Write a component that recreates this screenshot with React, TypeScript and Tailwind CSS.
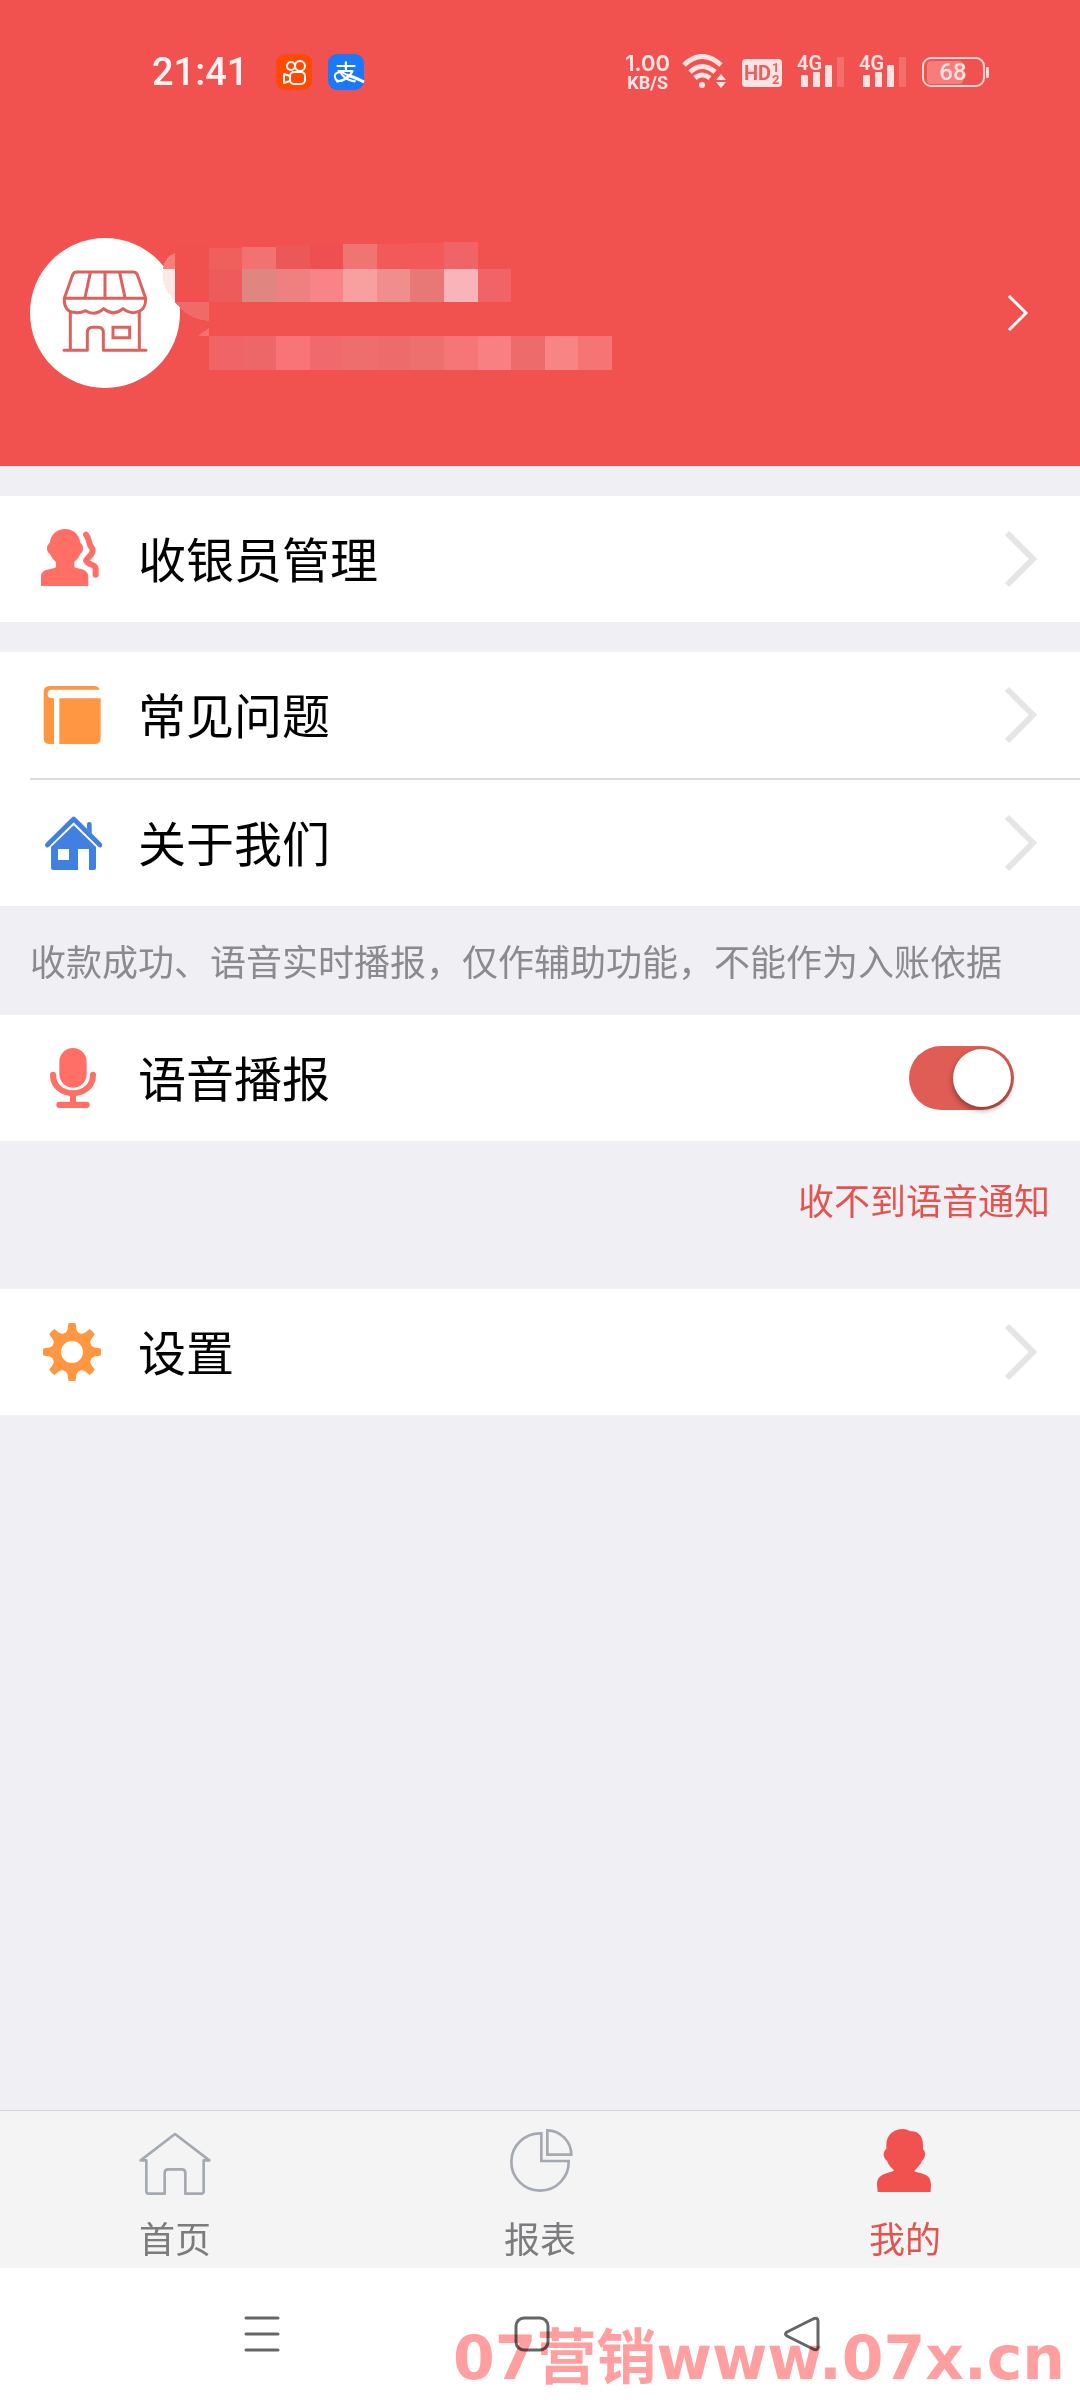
import React, { useState } from 'react';

interface IconProps {
  className?: string;
}

const mosaicCells: [number, number, number, number, string][] = [
  [209, 248, 33, 21, '#ef5f5c'], [242, 247, 34, 22, '#f17270'], [276, 245, 34, 24, '#ea5858'], [310, 245, 33, 24, '#ee5051'],
  [343, 244, 34, 25, '#f07472'], [377, 244, 33, 25, '#f25a59'], [410, 243, 34, 26, '#f25958'], [444, 242, 34, 27, '#f06468'],
  [175, 246, 34, 56, '#f0514f'], [209, 269, 33, 33, '#ed5c5b'], [242, 269, 34, 33, '#e08680'], [276, 269, 34, 33, '#ef8080'],
  [310, 269, 33, 33, '#f88487'], [343, 269, 34, 33, '#f89f9f'], [377, 269, 33, 33, '#f08e8e'], [410, 269, 34, 33, '#e87876'],
  [444, 269, 34, 33, '#f8b4b8'], [478, 269, 33, 33, '#f06468'],
  [209, 336, 33, 34, '#f06468'], [242, 336, 34, 34, '#ed6668'], [276, 336, 34, 34, '#f87476'], [310, 336, 33, 34, '#f0696d'],
  [343, 336, 34, 34, '#ee6e6e'], [377, 336, 33, 34, '#ee6b6b'], [410, 336, 34, 34, '#ed706e'], [444, 336, 34, 34, '#f67678'],
  [478, 336, 33, 34, '#f88082'], [511, 336, 34, 34, '#ee6b6c'], [545, 336, 33, 34, '#f88484'], [578, 336, 34, 34, '#f67474'],
];

const NameMosaic: React.FC<IconProps> = ({ className }) => (
  <svg className={className} viewBox="160 238 480 150" shapeRendering="crispEdges" aria-hidden="true">
    <path d="M163 269C164 262 168 255 175 253V269Z" fill="#f4807c" />
    <path d="M163 269H175V300C168 294 163 286 163 278Z" fill="#fde8e6" />
    <path d="M175 302H209V321C196 320 184 315 175 302Z" fill="#f06a69" />
    <path d="M198 336L209 328V336Z" fill="#f17271" />
    {mosaicCells.map(([x, y, w, h, fill]) => (
      <rect key={`${x}-${y}`} x={x} y={y} width={w} height={h} fill={fill} />
    ))}
  </svg>
);

const StoreIcon: React.FC<IconProps> = ({ className }) => (
  <svg className={className} viewBox="90 54 450 450" fill="none" stroke="#dc625d" strokeWidth="9" strokeLinecap="round" strokeLinejoin="round">
    <path d="M193 235L218 164Q222 156 231 156H399Q408 156 412 164L437 235Z" />
    <path d="M271 158L255 233M315 158V233M359 158L375 233" />
    <path d="M193 235C191 258 202 275 219 277Q240 281 257 272Q285 290 311 266Q340 291 369 266Q392 284 414 275C430 270 438 254 437 235" />
    <path d="M211 277V391M418 275V391M192 391H262V338Q262 322 278 322H294Q310 322 310 338V391H438" />
    <path d="M339 322H389V353H339Z" strokeLinejoin="miter" />
  </svg>
);

const CashierIcon: React.FC<IconProps> = ({ className }) => (
  <svg className={className} viewBox="90 111 252 252">
    <path d="M195 147C220 147 238 163 241 188C252 196 252 214 241 221C237 232 230 239 223 246V260C228 268 265 262 265 290V318H123V290C123 262 163 270 168 260V246C160 239 154 232 150 222C138 214 138 198 149 189C153 163 170 147 195 147Z" fill="#ff6f65" />
    <path d="M258 164C270 178 263 190 277 206C283 222 264 230 258 242C264 256 286 252 287 266V284" fill="none" stroke="#ff6f65" strokeWidth="18" strokeLinecap="round" strokeLinejoin="round" />
  </svg>
);

const BookIcon: React.FC<IconProps> = ({ className }) => (
  <svg className={className} viewBox="90 579 252 252">
    <path d="M149 618H282Q296 618 299 629H157Q143 629 143 642Q143 655 157 655H162V792H149Q131 792 131 774V636Q131 618 149 618Z" fill="#ff9742" />
    <path d="M178 655H302V774Q302 792 284 792H178Z" fill="#ff9742" />
  </svg>
);

const HouseIcon: React.FC<IconProps> = ({ className }) => (
  <svg className={className} viewBox="90 963 252 252">
    <path d="M142 1095L221 1017L300 1095" fill="none" stroke="#4080e0" strokeWidth="14" strokeLinecap="round" strokeLinejoin="round" />
    <path d="M261 1046V1032Q261 1026 268 1026Q275 1026 275 1032V1062Z" fill="#4080e0" />
    <path fillRule="evenodd" d="M221 1036L288 1101V1164Q288 1170 282 1170H267V1107H234V1170H160Q153 1170 153 1164V1101ZM174 1107V1140H207V1107Z" fill="#4080e0" />
  </svg>
);

const MicIcon: React.FC<IconProps> = ({ className }) => (
  <svg className={className} viewBox="90 408 252 252">
    <rect x="178" y="444" width="82" height="119" rx="41" fill="#ff6f65" />
    <path d="M159 524C159 598 279 598 279 524" fill="none" stroke="#ff6f65" strokeWidth="18" strokeLinecap="round" />
    <path d="M210 580H228V606H210Z" fill="#ff6f65" />
    <rect x="169" y="605" width="100" height="19" rx="9" fill="#ff6f65" />
  </svg>
);

const GearIcon: React.FC<IconProps> = ({ className }) => (
  <svg className={className} viewBox="90 1230 252 252">
    {[0, 45, 90, 135, 180, 225, 270, 315].map((angle) => (
      <path
        key={angle}
        transform={`rotate(${angle} 216 1356)`}
        d="M192 1302Q204 1296 204 1275Q204 1269 210 1269H222Q228 1269 228 1275Q228 1296 240 1302Z"
        fill="#ff9742"
      />
    ))}
    <circle cx="216" cy="1356" r="47" fill="none" stroke="#ff9742" strokeWidth="28" />
  </svg>
);

const HomeTabIcon: React.FC<IconProps> = ({ className }) => (
  <svg className={className} viewBox="99 90 252 252" fill="none" stroke="#a5a9b1" strokeWidth="8" strokeLinejoin="round">
    <path d="M139 211H122L225 132L328 211H311V304Q311 311 304 311H256V249Q256 238 245 238H205Q194 238 194 249V311H146Q139 311 139 304Z" />
  </svg>
);

const PieTabIcon: React.FC<IconProps> = ({ className }) => (
  <svg className={className} viewBox="1194 90 252 252" fill="none" stroke="#a5a9b1" strokeWidth="8">
    <path d="M1324 130A86 86 0 1 0 1406 213H1324Z" />
    <path d="M1342 121A74 74 0 0 1 1414 194H1342Z" />
  </svg>
);

const MineTabIcon: React.FC<IconProps> = ({ className }) => (
  <svg className={className} viewBox="129 90 252 252">
    <path d="M249 117C258 117 266 120 271 124C290 121 309 134 309 165V178C318 184 318 204 306 212C301 226 291 232 283 244C299 252 333 248 333 284L332 306H173L171 284C171 248 208 252 222 241C213 232 206 226 201 212C188 204 188 184 199 177V162C200 134 222 117 249 117Z" fill="#f2524f" />
  </svg>
);

const Chevron: React.FC<IconProps> = ({ className }) => (
  <svg className={className} viewBox="0 0 36 60" fill="none" stroke="#e5e5e5" strokeWidth="6">
    <path d="M5 4L31 30L5 56" />
  </svg>
);

const Signal = () => (
  <svg className="w-[46px] h-9 overflow-visible" viewBox="0 0 46 36" fill="#ffe3e2">
    <text x="-1" y="16" fontSize="20" fontWeight="600" fontFamily="Roboto, sans-serif">4G</text>
    <rect x="3" y="21" width="7" height="12" rx="1" />
    <rect x="15" y="18" width="7" height="15" rx="1" />
    <rect x="27" y="11" width="7" height="22" rx="1" />
    <rect x="39" y="3" width="7" height="30" rx="1" opacity="0.2" />
  </svg>
);

const StatusBar = () => (
  <div className="flex items-center justify-between h-36 pl-[152px] pr-[90px]">
    <div className="flex items-center">
      <time className="font-[Roboto] text-[38px] font-medium leading-[48px] text-[#fff4f3]">21:41</time>
      <div className="flex gap-4 ml-7">
        <svg className="w-9 h-9" viewBox="0 0 36 36" fill="none" stroke="#fff" strokeWidth="2">
          <rect width="36" height="36" rx="9" fill="#ff4a06" stroke="none" />
          <circle cx="15" cy="12" r="4" />
          <circle cx="24" cy="12" r="5" />
          <rect x="14" y="18" width="15" height="12" rx="4" />
          <path d="M14 22L8 20V29L14 27" strokeLinejoin="round" />
        </svg>
        <svg className="w-9 h-9 overflow-visible" viewBox="0 0 36 36">
          <rect width="36" height="36" rx="9" fill="#1b78fb" />
          <text x="18" y="26" textAnchor="middle" fontSize="22" fontWeight="500" fill="#fff" fontFamily="'Noto Sans CJK SC', sans-serif">支</text>
          <path d="M19 21Q26 23 36 28" fill="none" stroke="#fff" strokeWidth="3" />
          <path d="M19 21C12 16 6 19 7 23C8 29 16 28 20 22" fill="none" stroke="#fff" strokeWidth="2" />
        </svg>
      </div>
    </div>
    <div className="flex items-center gap-4">
      <div className="text-center text-[#ffe9e8]">
        <div className="font-[Inter] text-[22px] leading-[22px] font-semibold">1.00</div>
        <div className="font-[Roboto] text-[18px] leading-[18px] font-bold">KB/S</div>
      </div>
      <svg className="w-[44px] h-9 -ml-1" viewBox="0 0 44 36" fill="none" stroke="#ffe3e2" strokeWidth="5">
        <path d="M2 11Q20 -6 39 11M8 18Q20 7 33 18M13 24Q20 18 28 24" />
        <circle cx="20" cy="31" r="3" fill="#ffe3e2" stroke="none" />
        <path d="M39 20L44 26H34ZM39 34L34 28H44Z" fill="#ffe3e2" stroke="none" />
      </svg>
      <svg className="w-10 h-9" viewBox="0 0 40 36">
        <rect y="5" width="40" height="28" rx="4" fill="#ffe3e2" />
        <g fill="#e9605c" fontFamily="Roboto, sans-serif" fontWeight="700">
          <text x="2" y="26" fontSize="20">HD</text>
          <text x="30" y="18" fontSize="13">1</text>
          <text x="30" y="30" fontSize="13">2</text>
        </g>
      </svg>
      <Signal />
      <Signal />
      <svg className="w-[68px] h-9" viewBox="0 0 68 36">
        <rect x="5" y="7" width="36" height="23" rx="4" fill="#f87c7a" />
        <rect x="1" y="4" width="61" height="28" rx="8" fill="none" stroke="#ffd9d8" strokeWidth="2" />
        <rect x="64" y="13" width="3" height="11" rx="1" fill="#ffd9d8" />
        <text x="31" y="26" textAnchor="middle" fontSize="24" fontWeight="500" fill="#ffe3e2" fontFamily="Roboto, sans-serif">68</text>
      </svg>
    </div>
  </div>
);

interface MenuRowProps {
  icon: React.ReactNode;
  label: string;
}

const MenuRow: React.FC<MenuRowProps> = ({ icon, label }) => (
  <button className="flex items-center w-full h-[126px] pl-[30px] pr-[42px] bg-white text-left">
    {icon}
    <span className="flex-1 ml-6 pb-1 text-[48px] leading-[72px] text-black">{label}</span>
    <Chevron className="w-9 h-[60px]" />
  </button>
);

const tabs = [
  { id: 'home', label: '首页', Icon: HomeTabIcon },
  { id: 'report', label: '报表', Icon: PieTabIcon },
  { id: 'mine', label: '我的', Icon: MineTabIcon },
];

const App = () => {
  const [voiceOn, setVoiceOn] = useState(true);
  const activeTab = 'mine';

  return (
    <div className="min-h-screen flex flex-col bg-[#efeff4] font-['Noto_Sans_CJK_SC',sans-serif]">
      <header className="bg-[#f2524f]">
        <StatusBar />
        <button className="flex items-center w-full pt-[94px] pb-[78px] pl-[30px] pr-[50px]" aria-label="profile">
          <span className="w-[150px] h-[150px] rounded-full bg-white">
            <StoreIcon className="w-full h-full" />
          </span>
          <NameMosaic className="relative -ml-5 w-[480px] h-[150px]" />
          <svg className="w-6 h-10 ml-auto" viewBox="0 0 24 40" fill="none" stroke="#fff" strokeWidth="3">
            <path d="M3 3L20 20L3 37" />
          </svg>
        </button>
      </header>

      <main className="flex-1">
        <section className="mt-[30px]">
          <MenuRow icon={<CashierIcon className="w-[84px] h-[84px]" />} label="收银员管理" />
        </section>

        <section className="mt-[30px] bg-white">
          <MenuRow icon={<BookIcon className="w-[84px] h-[84px]" />} label="常见问题" />
          <div className="h-[2px] ml-[30px] bg-[#dcdcdc]" />
          <MenuRow icon={<HouseIcon className="w-[84px] h-[84px]" />} label="关于我们" />
        </section>

        <p className="px-[30px] pt-[27px] pb-[28px] text-[36px] leading-[54px] text-[#8b8b8d]">
          收款成功、语音实时播报，仅作辅助功能，不能作为入账依据
        </p>

        <section className="flex items-center h-[126px] pl-[30px] pr-[66px] bg-white">
          <MicIcon className="w-[84px] h-[84px]" />
          <label htmlFor="voice" className="flex-1 ml-6 pb-1 text-[48px] leading-[72px] text-black">语音播报</label>
          <input
            id="voice"
            type="checkbox"
            role="switch"
            checked={voiceOn}
            onChange={(e) => setVoiceOn(e.target.checked)}
            className="appearance-none flex items-center w-[105px] h-16 px-[3px] rounded-full bg-[#ccc] checked:bg-[#df5d55] checked:justify-end before:content-[''] before:w-[58px] before:h-[58px] before:rounded-full before:bg-white before:shadow-[0_3px_6px_rgba(0,0,0,0.4)]"
          />
        </section>

        <div className="flex justify-end px-[30px] pt-[31px] pb-[63px]">
          <a href="#voice-help" className="text-[36px] leading-[54px] text-[#e4544f]">收不到语音通知</a>
        </div>

        <section>
          <MenuRow icon={<GearIcon className="w-[84px] h-[84px]" />} label="设置" />
        </section>
      </main>

      <nav className="flex justify-between px-[95px] pt-[9px] pb-1 bg-[#f4f4f4] border-t border-[#d6d6e0]">
        {tabs.map(({ id, label, Icon }) => (
          <button key={id} className="flex flex-col items-center gap-[6px] w-40">
            <Icon className="w-[84px] h-[84px]" />
            <span className={`text-[36px] leading-[54px] ${id === activeTab ? 'text-[#e4544f]' : 'text-[#7c7c7e]'}`}>{label}</span>
          </button>
        ))}
      </nav>

      <footer className="relative flex items-center justify-between h-[132px] pl-[220px] pr-[236px] bg-white">
        <button className="flex justify-center w-[84px]" aria-label="menu">
          <svg className="w-9 h-9" viewBox="0 0 36 36" stroke="#666" strokeWidth="3" strokeLinecap="round">
            <path d="M2 2H34M2 18H34M2 34H34" />
          </svg>
        </button>
        <button className="flex justify-center w-[84px]" aria-label="home">
          <svg className="w-9 h-9" viewBox="0 0 36 36" fill="none" stroke="#666" strokeWidth="3">
            <rect x="2" y="2" width="32" height="32" rx="8" />
          </svg>
        </button>
        <button className="flex justify-center w-[84px]" aria-label="back">
          <svg className="w-9 h-9" viewBox="0 0 36 36" fill="none" stroke="#666" strokeWidth="3" strokeLinejoin="round">
            <path d="M3 16L29 3Q34 1 34 5V31Q34 35 29 33L3 20Q0 18 3 16Z" />
          </svg>
        </button>
        <span className="absolute right-[15px] bottom-[6px] text-[60px] leading-[72px] font-bold whitespace-nowrap text-[#ff9f9f] mix-blend-multiply font-['DejaVu_Sans','Noto_Sans_CJK_SC',sans-serif]">
          07营销www.07x.cn
        </span>
      </footer>
    </div>
  );
};

export default App;
